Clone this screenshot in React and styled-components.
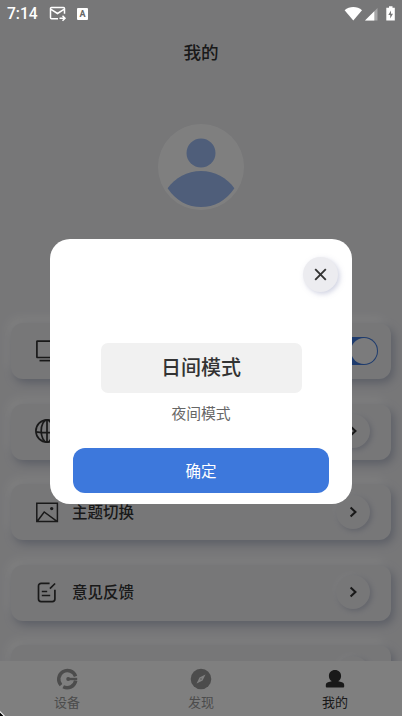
import React from 'react';
import styled, {createGlobalStyle, css} from 'styled-components';

const GlobalStyle = createGlobalStyle`
  * {
    box-sizing: border-box;
  }
  body {
    margin: 0;
    overflow: hidden;
    font-family: 'Noto Sans CJK SC', sans-serif;
  }
  svg {
    display: block;
    flex-shrink: 0;
  }
`;

const Screen = styled.div`
  position: relative;
  display: flex;
  flex-direction: column;
  width: 402px;
  height: 716px;
  overflow: hidden;
  background-color: #eeeef1;
`;

const Title = styled.h1`
  margin: 28px 0 0;
  height: 48px;
  font-size: 17.6px;
  font-weight: 500;
  line-height: 48px;
  text-align: center;
  color: #333;
`;

const Avatar = styled.div`
  align-self: center;
  margin-top: 48px;
  width: 86px;
  height: 86px;
  border-radius: 50%;
  background-color: #fff;
`;

const SettingList = styled.div`
  display: flex;
  flex: 1;
  flex-direction: column;
  gap: 24.6px;
  min-height: 0;
  margin-top: 113px;
  padding: 0 11px;
`;

const raised = css`
  background-color: #eeeef1;
  box-shadow: 3px 4px 9px rgba(148, 156, 180, 0.6), -4px -6px 10px rgba(255, 255, 255, 0.9);
`;

const SettingRow = styled.div`
  ${raised}
  display: flex;
  flex: none;
  align-items: center;
  height: 56px;
  padding: 0 21.5px 1px 24px;
  border-radius: 12px;
`;

const RowIcon = styled.div`
  width: 37px;
`;

const RowLabel = styled.div`
  flex: 1;
  padding-bottom: 2px;
  font-size: 15.5px;
  font-weight: 500;
  line-height: 24px;
  color: #333;
`;

const Arrow = styled.div`
  display: flex;
  align-items: center;
  justify-content: center;
  width: 34px;
  height: 34px;
  border-radius: 50%;
  background-color: #eeeef1;
  box-shadow: 2px 2px 5px rgba(148, 156, 180, 0.45), -2px -2px 4px rgba(255, 255, 255, 0.5);
`;

const Toggle = styled.div`
  display: flex;
  justify-content: flex-end;
  width: 54px;
  height: 28px;
  margin-right: -8px;
  padding: 1px;
  border-radius: 14px;
  background-color: #3c77db;
`;

const Knob = styled.div`
  width: 26px;
  height: 26px;
  border-radius: 50%;
  background-color: #f6f6f8;
`;

const TabBar = styled.div`
  display: flex;
  z-index: 0;
  height: 55px;
  background-color: #fff;
`;

const Tab = styled.div`
  display: flex;
  flex: 1;
  flex-direction: column;
  align-items: center;
  padding-top: 6px;
  font-size: 13px;
  line-height: 20px;
  color: ${props => (props.$active ? '#333' : '#999')};

  svg {
    margin-bottom: 1px;
  }
`;

const Mask = styled.div`
  position: absolute;
  inset: 0;
  display: flex;
  flex-direction: column;
  align-items: center;
  background-color: rgba(0, 0, 0, 0.5);
`;

const StatusBar = styled.div`
  display: flex;
  align-items: center;
  align-self: stretch;
  height: 27px;
  padding: 0 6px 0 7px;
  font-family: Roboto, sans-serif;
  font-size: 15.6px;
  font-weight: 500;
  color: #fff;
`;

const Time = styled.div`
  width: 42px;
`;

const StatusRight = styled.div`
  display: flex;
  margin-left: auto;
`;

const Dialog = styled.div`
  display: flex;
  flex-direction: column;
  align-items: center;
  width: 302px;
  height: 265px;
  margin-top: 212px;
  padding: 18px 14px 0;
  border-radius: 20px;
  background-color: #fff;
`;

const CloseButton = styled.button`
  display: flex;
  align-items: center;
  align-self: flex-end;
  justify-content: center;
  width: 35px;
  height: 35px;
  padding: 0;
  border: 0;
  border-radius: 50%;
  background-color: #ececf0;
  box-shadow: 2px 2px 5px rgba(165, 170, 200, 0.5);
`;

const SelectedOption = styled.div`
  width: 201px;
  height: 50px;
  margin-top: 51px;
  border-radius: 7px;
  background-color: #f1f1f1;
  font-size: 20px;
  font-weight: 500;
  line-height: 48px;
  text-align: center;
  color: #333;
`;

const Option = styled.div`
  margin-top: 8px;
  font-size: 14.8px;
  line-height: 24px;
  color: #666;
`;

const ConfirmButton = styled.button`
  width: 256.5px;
  height: 45px;
  margin-top: 23px;
  padding: 0 0 2px;
  border: 0;
  border-radius: 12px;
  background-color: #3d78dc;
  font-family: inherit;
  font-size: 15.5px;
  color: #fff;
`;

const ScreenCorner = styled.svg`
  position: absolute;
  left: 0;
  bottom: 0;
`;

const lineProps = {fill: 'none', stroke: '#333', strokeWidth: 1.7};

const MonitorIcon = () => (
  <svg width="24" height="24" viewBox="0 0 24 24" {...lineProps}>
    <rect x="1.9" y="2.1" width="21" height="16.4" rx="0.5" />
    <path d="M4.5 21.6h16" />
  </svg>
);

const GlobeIcon = () => (
  <svg width="24" height="24" viewBox="0 0 24 24" {...lineProps}>
    <circle cx="12" cy="12" r="11.1" />
    <ellipse cx="12" cy="12" rx="5.8" ry="11.1" />
    <path d="M12 1v22M1 12.8c6 1 16 1 22 0" />
  </svg>
);

const PictureIcon = () => (
  <svg width="24" height="24" viewBox="0 0 24 24" {...lineProps} strokeWidth="1.5">
    <path d="M1.8 3.2h20.6v18.4H1.8zM2.3 21.3l6.9-9.3L22 21.3" />
    <circle cx="16.7" cy="8.6" r="1.7" fill="#333" stroke="none" />
  </svg>
);

const FeedbackIcon = () => (
  <svg width="24" height="24" viewBox="0 0 24 24" {...lineProps}>
    <path d="M14.6 3.3H6.1a2.6 2.6 0 0 0-2.6 2.6v13.2a2.6 2.6 0 0 0 2.6 2.6h11.2a2.6 2.6 0 0 0 2.6-2.6V9.7" />
    <path d="M14.9 8.7l5.2-5.2M6.8 11.5h5.4M6.800 15.500h8.400" />
  </svg>
);

const ChevronIcon = () => (
  <svg width="12" height="12" viewBox="0 0 12 12" fill="none" stroke="#333" strokeWidth="2.1">
    <path d="M3.6 1.6L8.4 6l-4.8 4.4" />
  </svg>
);

const settings = [
  {label: '投屏显示', icon: <MonitorIcon />, toggle: true},
  {label: '语言切换', icon: <GlobeIcon />},
  {label: '主题切换', icon: <PictureIcon />},
  {label: '意见反馈', icon: <FeedbackIcon />},
  {label: '', icon: null}
];

const DeviceIcon = () => (
  <svg width="24" height="24" viewBox="0 0 24 24" fill="none" stroke="#999" strokeWidth="3.5">
    <path d="M20.6 9.3A8.7 8.7 0 1 0 6 18.1" />
    <path d="M8.2 19.8A8.7 8.7 0 0 0 20.7 13.6" />
    <path d="M12 12h10.2" strokeWidth="2.4" />
    <circle cx="13.2" cy="12" r="2" fill="#999" stroke="none" />
  </svg>
);

const CompassIcon = () => (
  <svg width="24" height="24" viewBox="0 0 24 24">
    <circle cx="12" cy="12" r="10.3" fill="#999" />
    <path d="M16.5 7.6L13.6 13.6 7.6 16.4 10.5 10.4z" fill="#fff" />
    <circle cx="12" cy="12" r="0.7" fill="#999" />
  </svg>
);

const ProfileIcon = () => (
  <svg width="24" height="24" viewBox="0 0 24 24" fill="#333">
    <path d="M12 3c-3.600 0-6.100 2.400-6.100 5.900 0 2.200 1 4 2.700 5.100v.3L5 15.200c-1.500.5-2.200 1.400-2.200 2.900v1.500c0 .6.3.9.9.9h16.600c.6 0 .9-.3.9-.9v-1.500c0-1.500-.7-2.400-2.200-2.900l-3.600-.9V14c1.700-1.100 2.700-2.900 2.700-5.100C18.100 5.400 15.600 3 12 3z" />
  </svg>
);

const MailIcon = () => (
  <svg width="18" height="18" viewBox="0 0 18 18" fill="none" stroke="#fff" strokeWidth="1.5">
    <path d="M9 13.7H2.5a1 1 0 0 1-1-1V3.500a1 1 0 0 1 1-1h12a1 1 0 0 1 1 1v5.300M2 4.300L8.500 8.500 15 4.300" />
    <path d="M10.5 13.2h5M13.5 10.7l2.5 2.5-2.5 2.5" />
  </svg>
);

const KeyboardBadge = styled.div`
  width: 11px;
  height: 12px;
  margin-left: 10px;
  border-radius: 1px;
  background-color: #fff;
  font-size: 9px;
  font-weight: 700;
  line-height: 12px;
  text-align: center;
  color: #666;
`;

const App = () => (
  <Screen>
    <GlobalStyle />
    <Title>我的</Title>
    <Avatar>
      <svg width="86" height="86" viewBox="0 0 86 86" fill="#9fbdf4">
        <circle cx="43" cy="29" r="14.5" />
        <path d="M9.6 64.2C17 54 29 47 43 47s26 7 33.4 17.2C68 77 56 83 43 83S18 77 9.6 64.2z" />
      </svg>
    </Avatar>
    <SettingList>
      {settings.map(({label, icon, toggle}, index) => (
        <SettingRow key={index}>
          <RowIcon>{icon}</RowIcon>
          <RowLabel>{label}</RowLabel>
          {toggle ? (
            <Toggle>
              <Knob />
            </Toggle>
          ) : (
            <Arrow>
              <ChevronIcon />
            </Arrow>
          )}
        </SettingRow>
      ))}
    </SettingList>
    <TabBar>
      <Tab>
        <DeviceIcon />
        设备
      </Tab>
      <Tab>
        <CompassIcon />
        发现
      </Tab>
      <Tab $active>
        <ProfileIcon />
        我的
      </Tab>
    </TabBar>
    <Mask>
      <StatusBar>
        <Time>7:14</Time>
        <MailIcon />
        <KeyboardBadge>A</KeyboardBadge>
        <StatusRight>
          <svg width="52" height="16" viewBox="0 0 52 16" fill="#fff">
            <path d="M.6 4.3C5.4-.1 13.3-.1 18 4.3L9.3 14.6z" />
            <path d="M21 14.5L33.5 2v12.5z" opacity="0.35" />
            <path d="M21 14.5L30.3 5.2v9.3z" />
            <path fillRule="evenodd" d="M45 .2h3.5v1.6h2.3v12.7h-8.5V1.8H45zM47 4.5L44.3 9h1.9v3.4L49 7.7h-2z" />
          </svg>
        </StatusRight>
      </StatusBar>
      <Dialog>
        <CloseButton aria-label="关闭">
          <svg width="13" height="13" viewBox="0 0 13 13" stroke="#333" strokeWidth="1.9">
            <path d="M1.2 1.2l10.6 10.6M11.8 1.2L1.2 11.8" />
          </svg>
        </CloseButton>
        <SelectedOption>日间模式</SelectedOption>
        <Option>夜间模式</Option>
        <ConfirmButton>确定</ConfirmButton>
      </Dialog>
    </Mask>
    <ScreenCorner width="5" height="5" viewBox="0 0 5 5">
      <path d="M0 0l5 5H0z" fill="#fff" />
      <path d="M0 1.5L3.5 5H0z" fill="#000" />
    </ScreenCorner>
  </Screen>
);

export default App;
